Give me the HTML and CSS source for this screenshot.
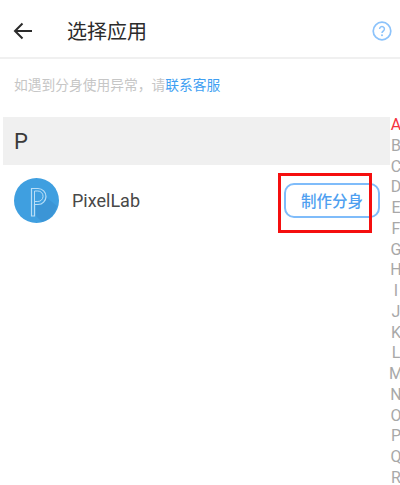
FILE: index.html
```html
<!DOCTYPE html>
<html lang="zh">
<head>
    <meta charset="UTF-8">
    <meta name="viewport" content="width=device-width, initial-scale=1.0">
    <title>选择应用</title>
    <link rel="stylesheet" href="styles.css">
</head>
<body>
    <div class="page">
        <div class="header">
            <svg class="back" width="20" height="18" viewBox="0 0 20 18">
                <path d="M19 9H2M9.500 1.500L2 9l7.500 7.500" fill="none" stroke="#2b2b2b" stroke-width="2"/>
            </svg>
            <h1>选择应用</h1>
            <svg class="help" width="20" height="20" viewBox="0 0 20 20">
                <circle cx="10" cy="10" r="8.800" fill="none" stroke="#8cc3fb" stroke-width="1.700"/>
                <path d="M7.600 8a2.400 2.400 0 1 1 3.700 2c-.9.600-1.300 1-1.300 2" fill="none" stroke="#8cc3fb" stroke-width="1.500"/>
                <circle cx="10" cy="14.300" r="1" fill="#8cc3fb"/>
            </svg>
        </div>
        <p class="hint">如遇到分身使用异常，请<a href="#">联系客服</a></p>
        <div class="section">P</div>
        <div class="app-row">
            <svg class="app-icon" width="45" height="45" viewBox="0 0 45 45">
                <circle cx="22.500" cy="22.500" r="22.500" fill="#3f9fe0"/>
                <path d="M22 38V27h6l5-7 10 8a22.500 22.500 0 0 1-15 16z" fill="#3b95d6"/>
                <path d="M17.500 38V10.500h6.500a8 8 0 0 1 0 16h-3.500V38z" fill="none" stroke="#b9def6" stroke-width="1.200"/>
                <path d="M20.500 38V13h3.300a5.200 5.200 0 0 1 0 10.500h-3.300" fill="none" stroke="#b9def6" stroke-width="1"/>
            </svg>
            <span class="app-name">PixelLab</span>
            <button class="clone-btn">制作分身</button>
        </div>
        <div class="mark"></div>
        <div class="letters">
            <span class="active">A</span>
            <span>B</span>
            <span>C</span>
            <span>D</span>
            <span>E</span>
            <span>F</span>
            <span>G</span>
            <span>H</span>
            <span>I</span>
            <span>J</span>
            <span>K</span>
            <span>L</span>
            <span>M</span>
            <span>N</span>
            <span>O</span>
            <span>P</span>
            <span>Q</span>
            <span>R</span>
        </div>
    </div>
</body>
</html>
```

FILE: styles.css
```css
/* CSS */
body {
    margin: 0;
    background-color: #fff;
    font-family: "Noto Sans CJK SC", "Liberation Sans", sans-serif;
}

.page {
    position: relative;
    width: 400px;
    height: 485px;
    overflow: hidden;
}

.header {
    display: flex;
    align-items: center;
    height: 59px;
    padding: 4px 8px 0 13px;
    box-sizing: border-box;
    border-bottom: 2px solid #f0f0f0;
}

.header h1 {
    flex: 1;
    margin: 0 0 0 34px;
    font-size: 20px;
    font-weight: 400;
    color: #2b2b2b;
}

.hint {
    margin: 0;
    padding: 15px 14px 0;
    height: 43px;
    font-size: 13.750px;
    line-height: 20px;
    color: #c6c6c6;
}

.hint a {
    color: #3f9ff2;
    text-decoration: none;
}

.section {
    height: 48px;
    margin: 0 10px 0 3px;
    padding-left: 11px;
    background-color: #f0f0f0;
    font-family: Roboto, sans-serif;
    font-size: 22px;
    line-height: 50px;
    color: #3a3a3a;
}

.app-row {
    display: flex;
    align-items: center;
    height: 70px;
    padding: 0 20px 0 14px;
}

.app-name {
    flex: 1;
    margin-left: 13px;
    font-family: Roboto, sans-serif;
    font-size: 18px;
    color: #484848;
}

.clone-btn {
    width: 96px;
    height: 35px;
    padding: 0;
    background-color: #fff;
    border: 2px solid #7fbcfa;
    border-radius: 10px;
    font-family: inherit;
    font-size: 15.500px;
    font-weight: 500;
    color: #4f9ff0;
}

/* red annotation box */
.mark {
    position: absolute;
    left: 278px;
    top: 173px;
    width: 88px;
    height: 54px;
    border: 3px solid #f50f0f;
}

.letters {
    position: absolute;
    left: 388px;
    top: 115px;
    width: 16px;
    display: flex;
    flex-direction: column;
    text-align: center;
    font-family: Roboto, sans-serif;
    font-size: 16px;
    line-height: 20.750px;
    color: #a8a8a8;
}

.letters .active {
    color: #f5333f;
}
```
